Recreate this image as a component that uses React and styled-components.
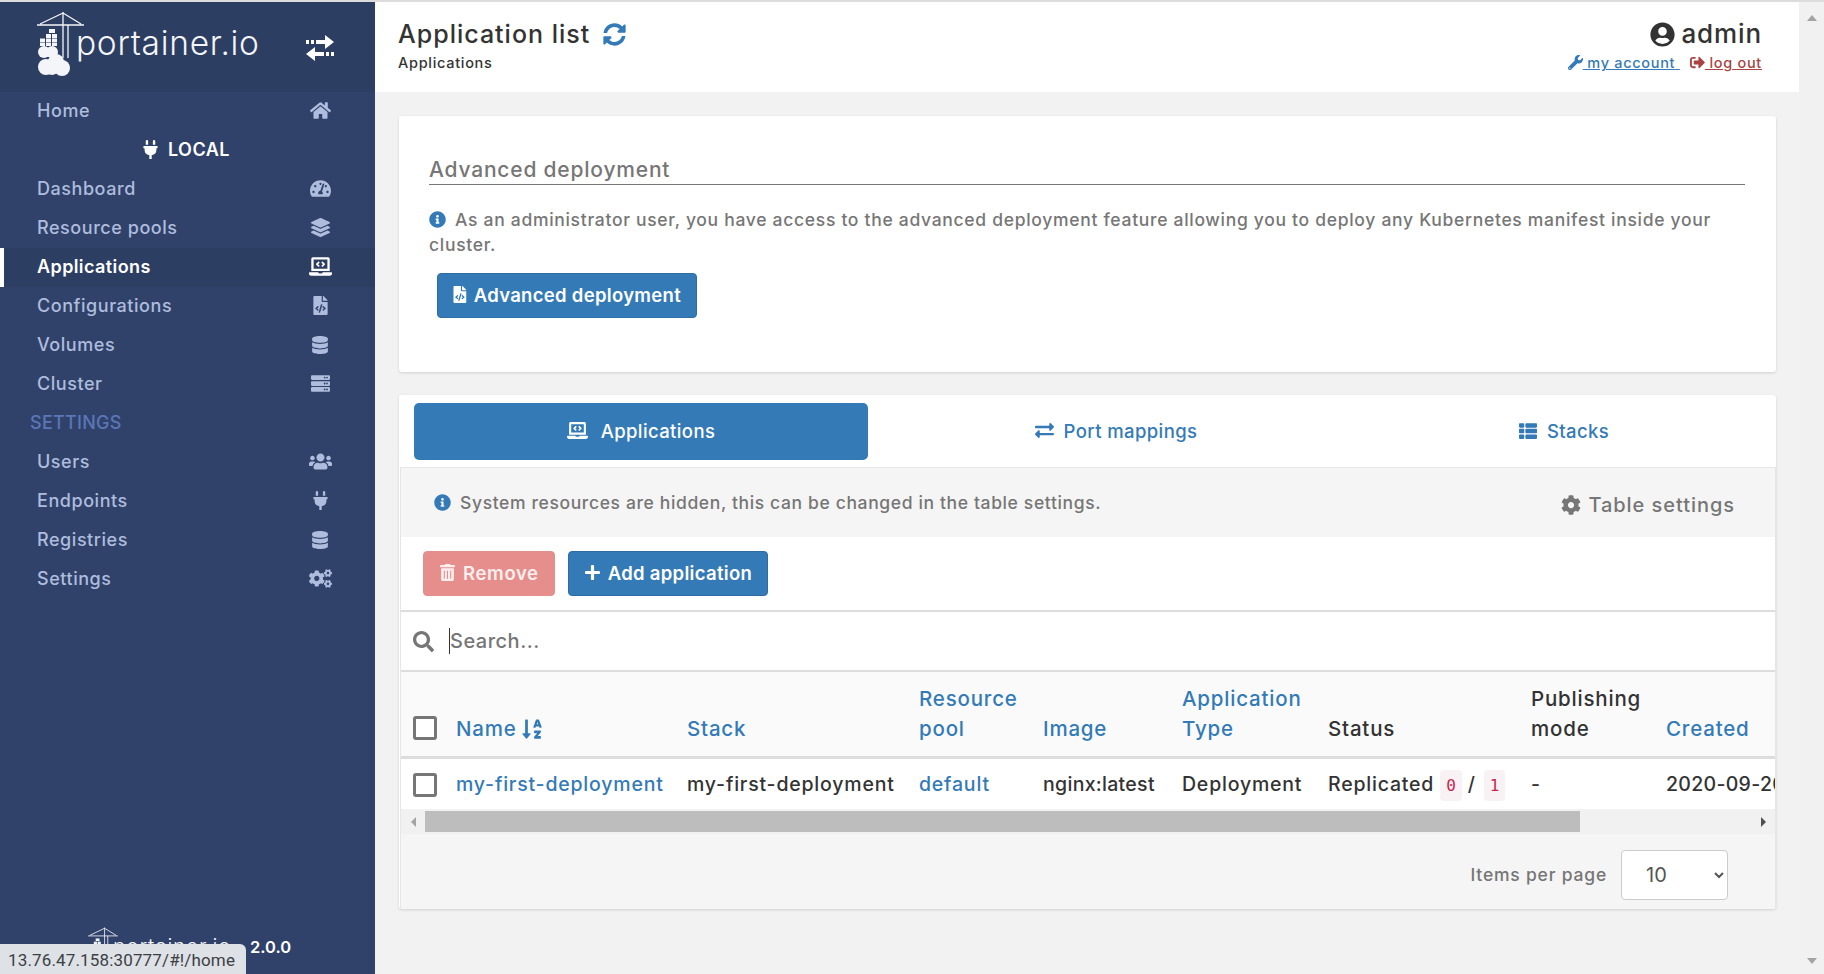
import React from "react";
import styled, { createGlobalStyle } from "styled-components";
import {
  FaHome, FaPlug, FaTachometerAlt, FaLayerGroup, FaLaptopCode, FaFileCode, FaDatabase, FaServer,
  FaUsers, FaCogs, FaSyncAlt, FaUserCircle, FaWrench, FaSignOutAlt, FaInfoCircle, FaExchangeAlt,
  FaThList, FaCog, FaTrashAlt, FaPlus, FaSearch, FaSortAlphaDown,
} from "react-icons/fa";

const Global = createGlobalStyle`
  html, body { margin: 0; padding: 0; height: 100%; overflow: hidden; }
  body { font-family: Inter, "Noto Sans", sans-serif; background: #f2f2f2; color: #333; }
  * { box-sizing: border-box; }
`;

const Page = styled.div`
  display: flex;
  height: 974px;
  border-top: 2px solid #dcdcdc;
`;

const Sidebar = styled.aside`
  width: 375px;
  flex: none;
  display: flex;
  flex-direction: column;
  background: #30426a;
`;

const Brand = styled.div`
  height: 90px;
  flex: none;
  background: #2d3e63;
  display: flex;
  align-items: flex-start;
  justify-content: space-between;
  padding: 9px 41px 0 37px;
`;

const BrandLogo = styled.div`
  display: flex;
  align-items: flex-start;
`;

const BrandName = styled.span`
  font-size: ${(p) => p.$size || 33.5}px;
  font-weight: 300;
  color: #f4f5f8;
  letter-spacing: 0.7px;
  line-height: 40px;
  margin: ${(p) => (p.$small ? "0 0 0 -5px" : "12px 0 0 -8px")};
`;

const ToggleIcon = styled.svg`
  width: 28px;
  height: 26px;
  margin-top: 24px;
  fill: #fff;
`;

const Nav = styled.nav`
  display: flex;
  flex-direction: column;
`;

const NavItem = styled.div`
  height: 39px;
  display: flex;
  align-items: center;
  justify-content: space-between;
  padding: 0 43px 2px ${(p) => (p.$active ? 33 : 37)}px;
  font-size: 18px;
  font-weight: ${(p) => (p.$active ? 600 : 500)};
  letter-spacing: ${(p) => (p.$active ? 0.4 : 0.55)}px;
  color: ${(p) => (p.$active ? "#fff" : "#aebcdd")};
  background: ${(p) => (p.$active ? "#2d3e63" : "transparent")};
  border-left: ${(p) => (p.$active ? "4px solid #fff" : "none")};
`;

const NavIcon = styled.span`
  display: flex;
  width: 24px;
  justify-content: center;
  color: ${(p) => (p.$active ? "#fff" : "#aebcdd")};
  font-size: ${(p) => p.$size}px;
`;

const EndpointLabel = styled.div`
  height: 39px;
  display: flex;
  align-items: center;
  justify-content: center;
  gap: 8px;
  color: #fff;
  font-size: 18px;
  font-weight: 600;
  letter-spacing: 0.5px;
  padding: 0 4px 2px 0;
  svg { font-size: 19px; }
`;

const SectionLabel = styled.div`
  height: 39px;
  display: flex;
  align-items: center;
  padding: 0 0 2px 30px;
  color: #5b76b6;
  font-size: 18px;
  font-weight: 500;
  letter-spacing: 0.25px;
`;

const SidebarFooter = styled.div`
  margin-top: auto;
  display: flex;
  align-items: center;
  height: 54px;
  padding-left: 88px;
  color: #fff;
  font-weight: 600;
  font-size: 16.5px;
`;

const FooterLogo = styled.div`
  display: flex;
  align-items: flex-start;
  width: 162px;
  height: 40px;
`;

const StatusBubble = styled.div`
  position: fixed;
  left: 0;
  bottom: 0;
  width: 246px;
  height: 30px;
  background: #dee1e6;
  border-top-right-radius: 6px;
  color: #3c4043;
  font-family: Roboto, sans-serif;
  font-size: 17px;
  letter-spacing: 0.15px;
  line-height: 32px;
  padding-left: 8px;
  white-space: nowrap;
`;

const Main = styled.main`
  flex: 1;
  min-width: 0;
  display: flex;
  flex-direction: column;
`;

const TopBar = styled.header`
  height: 90px;
  flex: none;
  background: #fff;
  display: flex;
  justify-content: space-between;
  padding: 14px 37px 0 23px;
`;

const TitleBlock = styled.div`
  display: flex;
  flex-direction: column;
`;

const Title = styled.h1`
  margin: 0;
  font-size: 25px;
  font-weight: 500;
  letter-spacing: 1px;
  line-height: 36px;
  color: #333;
  display: flex;
  align-items: center;
  gap: 13px;
  svg { color: #337ab7; font-size: 23px; }
`;

const Crumb = styled.div`
  font-size: 14.5px;
  font-weight: 500;
  line-height: 23px;
  margin-top: -1px;
  color: #333;
  letter-spacing: 0.7px;
`;

const UserBlock = styled.div`
  display: flex;
  flex-direction: column;
  align-items: flex-end;
`;

const UserName = styled.div`
  display: flex;
  align-items: center;
  gap: 6px;
  font-size: 26px;
  font-weight: 500;
  letter-spacing: 0.9px;
  line-height: 36px;
  color: #333;
  svg { font-size: 25px; }
`;

const UserLinks = styled.div`
  display: flex;
  gap: 10px;
  line-height: 23px;
  margin-top: -1px;
  font-size: 14.5px;
  font-weight: 500;
  letter-spacing: 0.7px;
`;

const UserLink = styled.a`
  color: ${(p) => p.$color};
  text-decoration: underline;
  display: inline-flex;
  align-items: center;
  white-space: pre;
  svg { font-size: 15px; }
`;

const Content = styled.div`
  flex: 1;
  min-width: 0;
  padding: 24px 23px 0 24px;
  display: flex;
  flex-direction: column;
  gap: 23px;
`;

const Card = styled.section`
  background: #fff;
  border-radius: 3px;
  box-shadow: 0 1px 3px rgba(0, 0, 0, 0.14);
  overflow: hidden;
`;

const DeployBody = styled.div`
  height: 256px;
  padding: 39px 31px 0 30px;
`;

const SectionHeading = styled.div`
  font-size: 21px;
  font-weight: 500;
  line-height: 29px;
  color: #767676;
  letter-spacing: 0.8px;
  border-bottom: 1px solid #777;
`;

const HelpText = styled.p`
  margin: 22px 0 0;
  font-size: 17.5px;
  font-weight: 500;
  line-height: 25px;
  color: #767676;
  letter-spacing: 0.7px;
  svg { color: #337ab7; font-size: 17px; vertical-align: -2px; margin-right: 9px; }
`;

const Button = styled.button`
  height: 45px;
  border: 1px solid ${(p) => (p.$muted ? "#e58e8c" : "#2e6da4")};
  border-radius: 4px;
  background: ${(p) => (p.$muted ? "#e58e8c" : "#337ab7")};
  color: ${(p) => (p.$muted ? "#fbeeee" : "#fff")};
  font-family: inherit;
  font-size: 18.5px;
  font-weight: 600;
  letter-spacing: ${(p) => (p.$muted ? 0.65 : 0.3)}px;
  padding: 0 15px 2px;
  display: inline-flex;
  align-items: center;
  gap: 7px;
  white-space: nowrap;
  svg { font-size: 17px; }
`;

const DeployButton = styled(Button)`
  margin: 16px 0 0 8px;
  width: 260px;
`;

const TabRow = styled.div`
  display: grid;
  grid-template-columns: 454px 496px 400px;
  padding: 8px 0 7px 15px;
`;

const Tab = styled.div`
  height: 57px;
  border-radius: 5px;
  display: flex;
  align-items: center;
  justify-content: center;
  gap: ${(p) => p.$gap}px;
  padding-bottom: 2px;
  font-size: 18.5px;
  font-weight: 500;
  letter-spacing: 0.4px;
  background: ${(p) => (p.$active ? "#337ab7" : "transparent")};
  color: ${(p) => (p.$active ? "#fff" : "#337ab7")};
  svg { font-size: ${(p) => p.$iconSize}px; }
`;

const Panel = styled.div`
  margin-left: 1px;
  border-top: 1px solid #e6e6e6;
  border-left: 1px solid #e6e6e6;
  border-right: 1px solid #e6e6e6;
`;

const InfoStrip = styled.div`
  height: 69px;
  background: #f5f5f5;
  display: flex;
  align-items: center;
  justify-content: space-between;
  padding: 0 40px 0 33px;
  color: #767676;
  font-size: 17.5px;
  font-weight: 500;
  letter-spacing: 0.63px;
  svg { color: #337ab7; font-size: 17px; vertical-align: -2px; margin-right: 9px; }
`;

const TableSettings = styled.div`
  display: flex;
  align-items: center;
  gap: 7px;
  font-size: 20px;
  margin-top: 5px;
  letter-spacing: 0.95px;
  svg { color: #767676; font-size: 20px; margin: 0; vertical-align: 0; }
`;

const Toolbar = styled.div`
  height: 75px;
  display: flex;
  align-items: center;
  gap: 13px;
  padding: 0 0 0 22px;
  border-bottom: 2px solid #ddd;
`;

const SearchBar = styled.div`
  height: 60px;
  display: flex;
  align-items: center;
  padding-left: 12px;
  border-bottom: 2px solid #ddd;
  svg { color: #767676; font-size: 21px; }
`;

const Caret = styled.span`
  width: 1px;
  height: 26px;
  background: #333;
  margin-left: 15px;
`;

const SearchInput = styled.input`
  border: none;
  outline: none;
  flex: 1;
  font-family: inherit;
  font-size: 20px;
  font-weight: 500;
  letter-spacing: 0.5px;
  padding: 0;
  color: #767676;
  &::placeholder { color: #767676; opacity: 1; }
`;

const TableClip = styled.div`
  overflow: hidden;
`;

const Table = styled.table`
  width: 1498px;
  table-layout: fixed;
  border-collapse: collapse;
`;

const HeadCell = styled.th`
  height: 85px;
  background: #fafafa;
  border-bottom: 3px solid #ddd;
  padding: 9px 0 0;
  font-weight: 500;
  font-size: 20.5px;
  line-height: 30px;
  text-align: left;
  vertical-align: bottom;
  letter-spacing: 0.8px;
  color: ${(p) => (p.$link ? "#337ab7" : "#333")};
  > div { padding-bottom: 12px; display: flex; align-items: center; gap: 4px; }
`;

const CheckCell = styled(HeadCell)`
  > div { padding-bottom: 16px; }
`;

const Cell = styled.td`
  height: 52px;
  padding: 0;
  background: #fff;
  white-space: nowrap;
  font-size: 19.5px;
  font-weight: 500;
  letter-spacing: ${(p) => (p.$tight ? 0.3 : 0.8)}px;
  color: ${(p) => (p.$link ? "#337ab7" : "#333")};
`;

const CheckBox = styled.span`
  display: inline-block;
  width: 24px;
  height: 24px;
  border: 3px solid #767676;
  border-radius: 3px;
  background: #fff;
  margin-left: 12px;
  vertical-align: middle;
`;

const Code = styled.code`
  font-family: "DejaVu Sans Mono", monospace;
  font-size: 16px;
  letter-spacing: 0;
  color: #c7254e;
  background: #f9f2f4;
  border-radius: 4px;
  padding: 6px 6px;
  & + & { margin-left: 2px; }
`;

const HScroll = styled.div`
  height: 25px;
  background: #f1f1f1;
  display: flex;
  align-items: center;
`;

const ScrollArrow = styled.span`
  flex: none;
  width: 24px;
  display: flex;
  justify-content: center;
  &::before {
    content: "";
    border-style: solid;
    border-width: 5px 0 5px 5px;
    border-color: transparent transparent transparent ${(p) => (p.$dim ? "#a3a3a3" : "#505050")};
    transform: ${(p) => (p.$flip ? "scaleX(-1)" : "none")};
  }
`;

const ScrollTrack = styled.div`
  flex: 1;
  height: 21px;
`;

const ScrollThumb = styled.div`
  height: 100%;
  background: #bdbdbd;
`;

const Pager = styled.div`
  height: 75px;
  background: #f5f5f5;
  display: flex;
  align-items: center;
  justify-content: flex-end;
  gap: 14px;
  padding: 6px 47px 0 0;
  color: #767676;
  font-size: 17.5px;
  font-weight: 500;
  letter-spacing: 0.8px;
`;

const PageSelect = styled.select`
  width: 107px;
  height: 50px;
  background: #fff;
  border: 1px solid #ccc;
  border-radius: 4px;
  font-family: inherit;
  font-size: 20px;
  padding-left: 20px;
  color: #555;
`;

const PageScroll = styled.div`
  width: 25px;
  flex: none;
  background: #f1f1f1;
  display: flex;
  flex-direction: column;
  justify-content: space-between;
  align-items: center;
  padding: 13px 0 10px;
`;

const PageArrow = styled.span`
  border-left: 5.5px solid transparent;
  border-right: 5.5px solid transparent;
  border-${(p) => (p.$down ? "top" : "bottom")}: 6px solid #a3a3a3;
`;

function Crane({ width = 47, height = 66, color = "#f4f5f8" }) {
  return (
    <svg width={width} height={height} viewBox="0 0 47 66" style={{ flex: "none" }}>
      <g stroke={color} strokeWidth="1.3" fill="none">
        <path d="M0 14H47M26 1V47M31 14V47M26 2L3 13M26 2L44 13" />
      </g>
      <g fill={color}>
        <rect x="12" y="18" width="6" height="4" />
        <rect x="9" y="23" width="5" height="4" />
        <rect x="15" y="23" width="5" height="4" />
        <rect x="3" y="27.5" width="5" height="4" />
        <rect x="9" y="27.5" width="5" height="4" />
        <rect x="15" y="27.5" width="5" height="4" />
        <rect x="3" y="32" width="5" height="3" />
        <rect x="9" y="32" width="5" height="3" />
        <rect x="15" y="32" width="5" height="3" />
        <circle cx="7" cy="41" r="6" />
        <circle cx="15" cy="41" r="6" />
        <circle cx="9" cy="56" r="8" />
        <circle cx="19" cy="51" r="8" />
        <circle cx="25" cy="57" r="8" />
        <circle cx="15" cy="58" r="6" />
      </g>
    </svg>
  );
}

const navTop = [
  { label: "Dashboard", icon: <FaTachometerAlt />, size: 21 },
  { label: "Resource pools", icon: <FaLayerGroup />, size: 19 },
  { label: "Applications", icon: <FaLaptopCode />, size: 23, active: true },
  { label: "Configurations", icon: <FaFileCode />, size: 19 },
  { label: "Volumes", icon: <FaDatabase />, size: 18 },
  { label: "Cluster", icon: <FaServer />, size: 19 },
];

const navSettings = [
  { label: "Users", icon: <FaUsers />, size: 23 },
  { label: "Endpoints", icon: <FaPlug />, size: 19 },
  { label: "Registries", icon: <FaDatabase />, size: 18 },
  { label: "Settings", icon: <FaCogs />, size: 23 },
];

function SideLink({ item }) {
  return (
    <NavItem $active={item.active}>
      {item.label}
      <NavIcon $active={item.active} $size={item.size}>{item.icon}</NavIcon>
    </NavItem>
  );
}

const columns = [
  { w: 55 },
  { w: 231, label: "Name", link: true, sort: true },
  { w: 232, label: "Stack", link: true },
  { w: 124, label: ["Resource", "pool"], link: true },
  { w: 139, label: "Image", link: true },
  { w: 146, label: ["Application", "Type"], link: true },
  { w: 203, label: "Status" },
  { w: 135, label: ["Publishing", "mode"] },
  { w: 233, label: "Created", link: true },
];

export default function App() {
  return (
    <>
      <Global />
      <Page>
        <Sidebar>
          <Brand>
            <BrandLogo>
              <Crane />
              <BrandName>portainer.io</BrandName>
            </BrandLogo>
            <ToggleIcon viewBox="0 0 28 26">
              <path d="M0 5h3v4H0zM5 5h3v4H5zM10 5h9V0l9 7-9 7V9h-9zM28 17h-3v4h3zM23 17h-3v4h3zM18 17H9v-5l-9 7 9 7v-5h9z" />
            </ToggleIcon>
          </Brand>
          <Nav>
            <SideLink item={{ label: "Home", icon: <FaHome />, size: 21 }} />
            <EndpointLabel>
              <FaPlug />
              LOCAL
            </EndpointLabel>
            {navTop.map((item) => (
              <SideLink key={item.label} item={item} />
            ))}
            <SectionLabel>SETTINGS</SectionLabel>
            {navSettings.map((item) => (
              <SideLink key={item.label} item={item} />
            ))}
          </Nav>
          <SidebarFooter>
            <FooterLogo>
              <Crane width={30} height={42} />
              <BrandName $size={21} $small>portainer.io</BrandName>
            </FooterLogo>
            2.0.0
          </SidebarFooter>
        </Sidebar>
        <StatusBubble>13.76.47.158:30777/#!/home</StatusBubble>

        <Main>
          <TopBar>
            <TitleBlock>
              <Title>
                Application list
                <FaSyncAlt />
              </Title>
              <Crumb>Applications</Crumb>
            </TitleBlock>
            <UserBlock>
              <UserName>
                <FaUserCircle />
                admin
              </UserName>
              <UserLinks>
                <UserLink $color="#337ab7">
                  <FaWrench /> my account{" "}
                </UserLink>
                <UserLink $color="#a94442">
                  <FaSignOutAlt /> log out
                </UserLink>
              </UserLinks>
            </UserBlock>
          </TopBar>
          <Content>
            <Card>
              <DeployBody>
                <SectionHeading>Advanced deployment</SectionHeading>
                <HelpText>
                  <FaInfoCircle />
                  As an administrator user, you have access to the advanced deployment feature allowing you to deploy any Kubernetes manifest inside your cluster.
                </HelpText>
                <DeployButton>
                  <FaFileCode />
                  Advanced deployment
                </DeployButton>
              </DeployBody>
            </Card>
            <Card>
              <TabRow>
                <Tab $active $gap={13} $iconSize={21}>
                  <FaLaptopCode />
                  Applications
                </Tab>
                <Tab $gap={10} $iconSize={19}>
                  <FaExchangeAlt />
                  Port mappings
                </Tab>
                <Tab $gap={10} $iconSize={18}>
                  <FaThList />
                  Stacks
                </Tab>
              </TabRow>
              <Panel>
                <InfoStrip>
                  <span>
                    <FaInfoCircle />
                    System resources are hidden, this can be changed in the table settings.
                  </span>
                  <TableSettings>
                    <FaCog />
                    Table settings
                  </TableSettings>
                </InfoStrip>
                <Toolbar>
                  <Button $muted>
                    <FaTrashAlt />
                    Remove
                  </Button>
                  <Button>
                    <FaPlus />
                    Add application
                  </Button>
                </Toolbar>
                <SearchBar>
                  <FaSearch />
                  <Caret />
                  <SearchInput placeholder="Search..." readOnly />
                </SearchBar>
                <TableClip>
                  <Table>
                    <colgroup>
                      {columns.map((c, i) => (
                        <col key={i} style={{ width: c.w }} />
                      ))}
                    </colgroup>
                    <thead>
                      <tr>
                        <CheckCell>
                          <div>
                            <CheckBox />
                          </div>
                        </CheckCell>
                        {columns.slice(1).map((c, i) => (
                          <HeadCell key={i} $link={c.link}>
                            {Array.isArray(c.label) ? (
                              <>
                                {c.label[0]}
                                <div>{c.label[1]}</div>
                              </>
                            ) : (
                              <div>
                                {c.label}
                                {c.sort && <FaSortAlphaDown size={22} />}
                              </div>
                            )}
                          </HeadCell>
                        ))}
                      </tr>
                    </thead>
                    <tbody>
                      <tr>
                        <Cell>
                          <CheckBox />
                        </Cell>
                        <Cell $link>my-first-deployment</Cell>
                        <Cell>my-first-deployment</Cell>
                        <Cell $link>default</Cell>
                        <Cell $tight>nginx:latest</Cell>
                        <Cell>Deployment</Cell>
                        <Cell>
                          Replicated <Code>0</Code> / <Code>1</Code>
                        </Cell>
                        <Cell>-</Cell>
                        <Cell $tight>2020-09-20 10:12:44</Cell>
                      </tr>
                    </tbody>
                  </Table>
                </TableClip>
                <HScroll>
                  <ScrollArrow $dim $flip />
                  <ScrollTrack>
                    <ScrollThumb style={{ width: 1155 }} />
                  </ScrollTrack>
                  <ScrollArrow />
                </HScroll>
                <Pager>
                  Items per page
                  <PageSelect defaultValue="10">
                    <option>10</option>
                    <option>25</option>
                    <option>50</option>
                  </PageSelect>
                </Pager>
              </Panel>
            </Card>
          </Content>
        </Main>
        <PageScroll>
          <PageArrow />
          <PageArrow $down />
        </PageScroll>
      </Page>
    </>
  );
}
